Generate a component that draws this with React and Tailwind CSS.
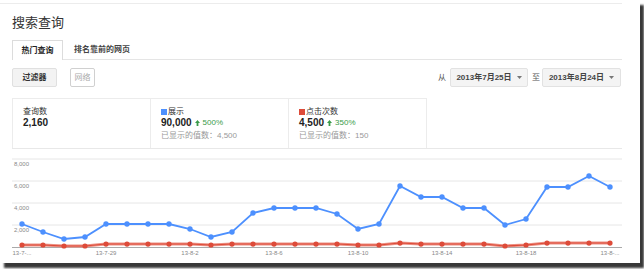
import React from 'react';

const FONT = { fontFamily: '"Liberation Sans", "Noto Sans CJK SC", sans-serif' };

// 13-7-25 .. 13-8-22, daily
const blue = [2090, 1360, 730, 910, 2090, 2090, 2090, 2090, 1640, 910, 1360, 3090, 3550, 3550, 3550, 3000, 1640, 2090, 5550, 4550, 4550, 3550, 3550, 2000, 2550, 5450, 5450, 6450, 5450];
const red = [180, 180, 90, 90, 270, 270, 270, 270, 270, 180, 270, 270, 270, 270, 270, 270, 180, 180, 360, 270, 270, 270, 270, 90, 180, 360, 360, 360, 360];

const xLabels = [
  { i: 0, t: '13-7-...' },
  { i: 4, t: '13-7-29' },
  { i: 8, t: '13-8-2' },
  { i: 12, t: '13-8-6' },
  { i: 16, t: '13-8-10' },
  { i: 20, t: '13-8-14' },
  { i: 24, t: '13-8-18' },
  { i: 28, t: '13-8-...' },
];

const px = (i) => 10 + i * 21;
const py = (v) => 98 - (v / 2000) * 22;

const Chart = () => {
  const grid = [8000, 6000, 4000, 2000];
  const line = (arr) => arr.map((v, i) => `${px(i)},${py(v).toFixed(1)}`).join(' ');
  return (
    <svg width="610" height="113" className="block">
      {grid.map((g) => (
        <g key={g}>
          <line x1="0" x2="610" y1={py(g)} y2={py(g)} stroke="#e6e6e6" strokeWidth="1" />
          <text x="2" y={py(g) + 7} fontSize="6" fill="#888" style={FONT}>
            {g.toLocaleString('en-US')}
          </text>
        </g>
      ))}
      <line x1="0" x2="610" y1="98.5" y2="98.5" stroke="#aaa" strokeWidth="1" />
      {xLabels.map((l) => (
        <text key={l.i} x={px(l.i)} y="106" fontSize="6" fill="#888" textAnchor="middle" style={FONT}>
          {l.t}
        </text>
      ))}
      <polyline points={line(red)} fill="none" stroke="#ec8f82" strokeWidth="3" />
      <polyline points={line(red)} fill="none" stroke="#dd4b39" strokeWidth="1.2" />
      {red.map((v, i) => (
        <circle key={i} cx={px(i)} cy={py(v)} r="2.6" fill="#dd4b39" />
      ))}
      <polyline points={line(blue)} fill="none" stroke="#4d90fe" strokeWidth="1.8" />
      {blue.map((v, i) => (
        <circle key={i} cx={px(i)} cy={py(v)} r="2.7" fill="#4d90fe" />
      ))}
    </svg>
  );
};

const Up = () => (
  <svg width="5" height="6" viewBox="0 0 5 6" className="inline-block mx-[3px]">
    <path d="M2.5 0 L5 3 L3.4 3 L3.4 6 L1.6 6 L1.6 3 L0 3 Z" fill="#3a9c4a" />
  </svg>
);

const Caret = () => (
  <svg width="5" height="3" viewBox="0 0 5 3" className="ml-[5px]">
    <path d="M0 0 L5 0 L2.5 3 Z" fill="#777" />
  </svg>
);

const stats = [
  { label: '查询数', value: '2,160' },
  { label: '展示', value: '90,000', color: 'bg-[#4d90fe]', change: '500%', shown: '4,500' },
  { label: '点击次数', value: '4,500', color: 'bg-[#dd4b39]', change: '350%', shown: '150' },
];

export default function App() {
  return (
    <div className="w-[644px] h-[269px] bg-white overflow-hidden" style={FONT}>
      <div className="w-[640px] h-[263px] bg-white shadow-[4px_5px_2px_rgba(0,0,0,0.78)] pt-[3px]">
        <div className="w-[622px] h-px bg-[#ececec]" />
        <div className="pl-[12px] w-[622px]">
          <div className="mt-[12px] h-[13px] leading-[13px] text-[13px] text-[#333]">搜索查询</div>

          {/* tabs */}
          <div className="mt-[11px] h-[20px] flex items-end border-b border-[#e5e5e5]">
            <div className="w-[51px] h-[20px] -mb-px bg-white border border-b-0 border-[#dcdcdc] flex items-center justify-center text-[8px] font-bold text-[#222]">
              热门查询
            </div>
            <div className="ml-[11px] h-[19px] flex items-center text-[8px] font-bold text-[#444]">排名靠前的网页</div>
          </div>

          {/* toolbar */}
          <div className="mt-[8px] h-[19px] flex items-center">
            <div className="w-[45px] h-[19px] bg-[#f3f3f3] border border-[#e0e0e0] rounded-[2px] flex items-center justify-center text-[8px] font-bold text-[#333]">
              过滤器
            </div>
            <div className="ml-[13px] w-[25px] h-[19px] bg-white border border-[#d0d0d0] rounded-[2px] flex items-center justify-center text-[8px] text-[#aaa]">
              网络
            </div>
            <div className="ml-auto flex items-center text-[8px] text-[#555]">
              <span>从</span>
              <div className="ml-[4px] w-[78px] h-[19px] bg-[#f4f4f4] border border-[#e2e2e2] rounded-[2px] flex items-center justify-center font-bold text-[#444]">
                2013年7月25日<Caret />
              </div>
              <span className="ml-[4px]">至</span>
              <div className="ml-[2px] mr-px w-[79px] h-[19px] bg-[#f4f4f4] border border-[#e2e2e2] rounded-[2px] flex items-center justify-center font-bold text-[#444]">
                2013年8月24日<Caret />
              </div>
            </div>
          </div>

          {/* stats */}
          <div className="mt-[11px] border-b border-[#e8e8e8]">
            <div className="w-[415px] h-[50px] flex border border-b-0 border-[#ececec]">
              {stats.map((s, i) => (
                <div key={i} className={`flex-1 pt-[8px] pl-[10px] ${i > 0 ? 'border-l border-[#ececec]' : ''}`}>
                  <div className="h-[10px] leading-[10px] flex items-center text-[8px] text-[#333]">
                    {s.color && <span className={`w-[6px] h-[6px] mr-[1px] ${s.color}`} />}
                    {s.label}
                  </div>
                  <div className="h-[12px] leading-[12px] flex items-center text-[10px] font-bold text-[#222]">
                    {s.value}
                    {s.change && (
                      <>
                        <Up />
                        <span className="text-[8px] font-normal text-[#3a9c4a]">{s.change}</span>
                      </>
                    )}
                  </div>
                  {s.shown && (
                    <div className="mt-[2px] h-[10px] leading-[10px] text-[8px] text-[#999]">已显示的值数：{s.shown}</div>
                  )}
                </div>
              ))}
            </div>
          </div>

          <Chart />
        </div>
      </div>
    </div>
  );
}
